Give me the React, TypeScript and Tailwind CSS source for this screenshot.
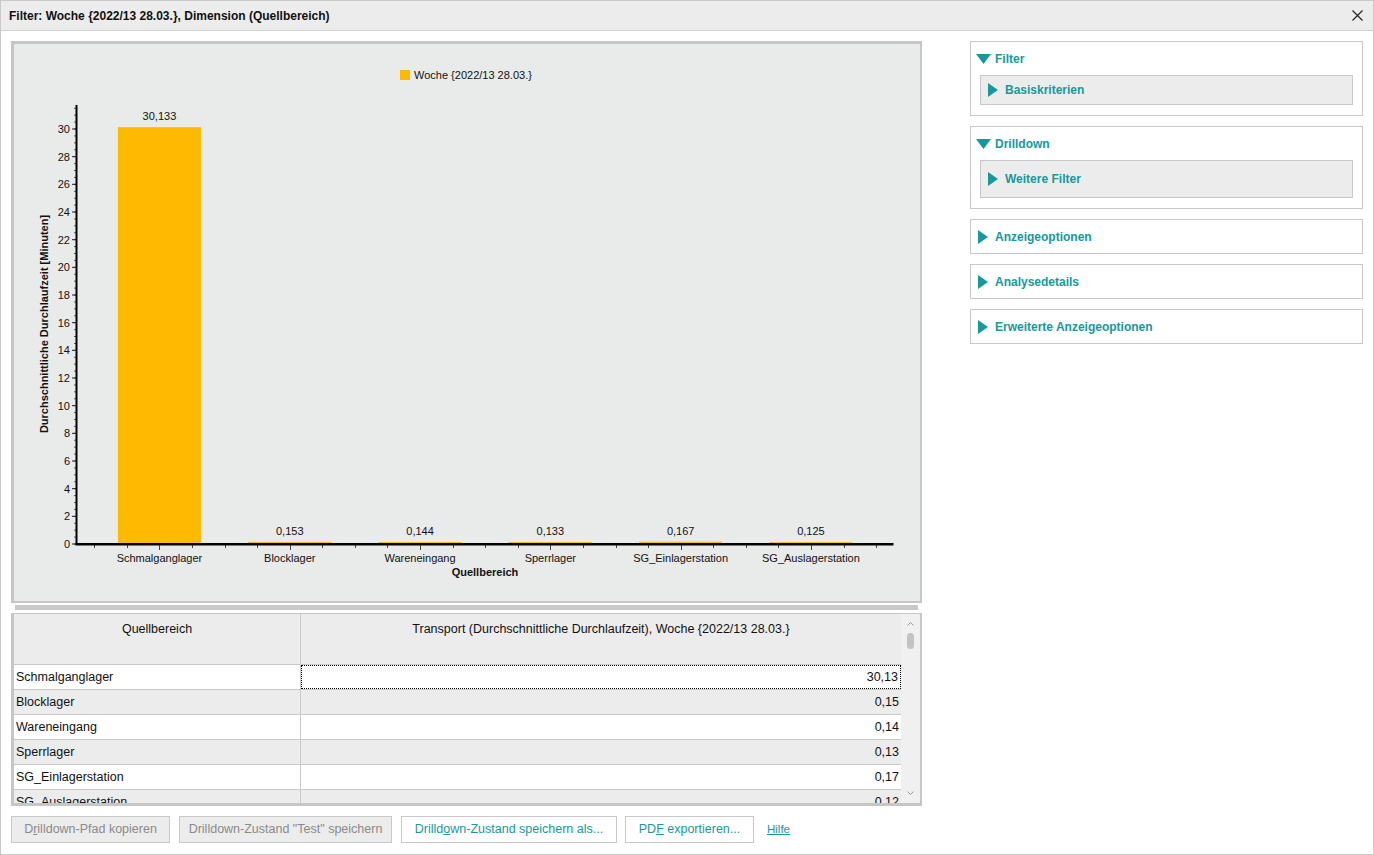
const TEAL = "#15999b";

type Bar = { name: string; value: number; label: string };

const bars: Bar[] = [
  { name: "Schmalganglager", value: 30.133, label: "30,133" },
  { name: "Blocklager", value: 0.153, label: "0,153" },
  { name: "Wareneingang", value: 0.144, label: "0,144" },
  { name: "Sperrlager", value: 0.133, label: "0,133" },
  { name: "SG_Einlagerstation", value: 0.167, label: "0,167" },
  { name: "SG_Auslagerstation", value: 0.125, label: "0,125" },
];

const rows = [
  ["Schmalganglager", "30,13"],
  ["Blocklager", "0,15"],
  ["Wareneingang", "0,14"],
  ["Sperrlager", "0,13"],
  ["SG_Einlagerstation", "0,17"],
  ["SG_Auslagerstation", "0,12"],
];

// chart geometry in page coordinates (viewBox starts at the panel's inner corner)
const Y0 = 544;
const UNIT = 13.833;
const X_START = 94.3;
const CAT_W = 130.3;

function Chart() {
  const yLabels = Array.from({ length: 16 }, (_, i) => i * 2);
  const minor = Array.from({ length: 64 }, (_, i) => i * 0.5);
  const xTicks = Array.from({ length: 25 }, (_, k) => k);
  return (
    <svg width={906} height={557} viewBox="14 44 906 557" className="block" style={{ fontFamily: '"Liberation Sans", Arial, sans-serif' }}>
      <rect x={400} y={70} width={10} height={10} fill="#ffb900" />
      <text x={414} y={79} fontSize={11} fill="#111">Woche {"{"}2022/13 28.03.{"}"}</text>

      {minor.map((v) => (
        <line key={v} x1={74} x2={76} y1={Y0 - v * UNIT} y2={Y0 - v * UNIT} stroke="#555" strokeWidth={1} />
      ))}
      {yLabels.map((v) => (
        <g key={v}>
          <line x1={72} x2={76} y1={Y0 - v * UNIT} y2={Y0 - v * UNIT} stroke="#222" strokeWidth={1} />
          <text x={70} y={Y0 - v * UNIT + 4} fontSize={11} textAnchor="end" fill="#111">{v}</text>
        </g>
      ))}

      {bars.map((b, i) => {
        const cx = X_START + CAT_W / 2 + i * CAT_W;
        const h = Math.max(b.value * UNIT, 2);
        return (
          <g key={b.name}>
            <rect x={cx - 41.5} y={Y0 - h} width={83} height={h} fill="#ffb900" />
            <text x={cx} y={Y0 - h - 7} fontSize={11} textAnchor="middle" fill="#111">{b.label}</text>
            <text x={cx} y={562} fontSize={11} textAnchor="middle" fill="#111">{b.name}</text>
          </g>
        );
      })}

      {xTicks.map((k) => {
        const x = Math.round(X_START + k * (CAT_W / 4)) + 0.5;
        return <line key={k} x1={x} x2={x} y1={545} y2={k % 4 === 2 ? 550 : 548} stroke="#444" strokeWidth={1} />;
      })}

      <rect x={75.5} y={105} width={2} height={440} fill="#000" />
      <rect x={75.5} y={543} width={818} height={2.5} fill="#000" />

      <text x={485} y={576} fontSize={11} fontWeight="bold" textAnchor="middle" fill="#111">Quellbereich</text>
      <text x={48} y={324} fontSize={11} fontWeight="bold" textAnchor="middle" fill="#111" transform="rotate(-90 48 324)">
        Durchschnittliche Durchlaufzeit [Minuten]
      </text>
    </svg>
  );
}

function TriDown() {
  return (
    <svg width={15} height={10} viewBox="0 0 15 10" className="shrink-0">
      <polygon points="0,0 15,0 7.5,10" fill={TEAL} />
    </svg>
  );
}

function TriRight() {
  return (
    <svg width={10} height={14} viewBox="0 0 10 14" className="shrink-0">
      <polygon points="0,0 10,7 0,14" fill={TEAL} />
    </svg>
  );
}

function Collapsed({ title }: { title: string }) {
  return (
    <div className="flex h-[35px] items-center gap-[7px] border border-[#c8c8c8] pl-[7px]">
      <TriRight />
      <span>{title}</span>
    </div>
  );
}

function Expanded({ title, sub, subH }: { title: string; sub: string; subH: string }) {
  return (
    <div className="flex flex-col border border-[#c8c8c8] pb-[10px]">
      <div className="flex h-[33px] items-center gap-[4px] pl-[5px]">
        <TriDown />
        <span>{title}</span>
      </div>
      <div className={`mx-[9px] flex items-center gap-[7px] border border-[#c8c8c8] bg-[#ececec] pl-[7px] ${subH}`}>
        <TriRight />
        <span>{sub}</span>
      </div>
    </div>
  );
}

export default function App() {
  return (
    <div
      className="flex h-[855px] w-[1374px] flex-col border border-[#c9c9c9] bg-white text-[#111]"
      style={{ fontFamily: '"Liberation Sans", Arial, sans-serif' }}
    >
      <div className="flex h-[30px] shrink-0 items-center justify-between border-b border-[#d2d2d2] bg-[#ececec] pl-[8px] pr-[10px]">
        <span className="text-[12px] font-bold">Filter: Woche {"{"}2022/13 28.03.{"}"}, Dimension (Quellbereich)</span>
        <svg width={11} height={11} viewBox="0 0 11 11">
          <path d="M0.5 0.5 L10.5 10.5 M10.5 0.5 L0.5 10.5" stroke="#222" strokeWidth={1.2} />
        </svg>
      </div>

      <div className="flex pl-[10px] pt-[10px]">
        <div className="flex w-[911px] flex-col">
          <div className="h-[562px] border-b-2 border-l-[3px] border-r-2 border-t-[3px] border-[#c6c6c6] bg-[#e9eaea]">
            <Chart />
          </div>

          <div className="h-[10px] pt-[2px]">
            <div className="mx-[4px] h-[5px] bg-[#c8c8c8]" />
          </div>

          <div className="flex h-[193px] border-b-[3px] border-l-[3px] border-r-2 border-t border-[#c6c6c6] text-[12.5px]">
            <div className="flex w-[887px] flex-col overflow-hidden">
              <div className="flex h-[51px] shrink-0 border-b border-[#c8c8c8] bg-[#ececec]">
                <div className="w-[287px] border-r border-[#c8c8c8] pt-[6px] text-center">Quellbereich</div>
                <div className="flex-1 pt-[6px] text-center">
                  Transport (Durchschnittliche Durchlaufzeit), Woche {"{"}2022/13 28.03.{"}"}
                </div>
              </div>
              {rows.map(([name, val], i) => (
                <div
                  key={name}
                  className={`flex h-[25px] shrink-0 border-b border-[#c8c8c8] ${i % 2 === 0 ? "bg-white" : "bg-[#ececec]"}`}
                >
                  <div className="flex w-[287px] items-center border-r border-[#c8c8c8] pl-[2px]">{name}</div>
                  <div className="flex-1">
                    <div
                      className={`flex h-full items-center justify-end pr-[2px] ${
                        i === 0 ? "border border-dotted border-black" : ""
                      }`}
                    >
                      {val}
                    </div>
                  </div>
                </div>
              ))}
            </div>
            <div className="relative w-[19px] bg-[#f0f0f0]">
              <svg width={7} height={4} viewBox="0 0 7 4" className="absolute left-[6px] top-[8px]">
                <path d="M0.5 3.5 L3.5 0.5 L6.5 3.5" stroke="#9a9a9a" fill="none" />
              </svg>
              <div className="absolute left-[6px] top-[19px] h-[16px] w-[7px] rounded-full bg-[#c3c3c3]" />
              <svg width={7} height={4} viewBox="0 0 7 4" className="absolute bottom-[8px] left-[6px]">
                <path d="M0.5 0.5 L3.5 3.5 L6.5 0.5" stroke="#9a9a9a" fill="none" />
              </svg>
            </div>
          </div>

          <div className="mt-[10px] flex h-[27px] items-stretch text-[12.5px]">
            <button type="button" className="w-[159px] border border-[#c8c8c8] bg-[#ececec] text-[#8a8a8a]">
              D<u>r</u>illdown-Pfad kopieren
            </button>
            <button type="button" className="ml-[9px] w-[213px] border border-[#c8c8c8] bg-[#ececec] text-[#8a8a8a]">
              Drilldown-Zustand "Test" speichern
            </button>
            <button type="button" className="ml-[9px] w-[216px] border border-[#c8c8c8] bg-white" style={{ color: TEAL }}>
              Drilld<u>o</u>wn-Zustand speichern als...
            </button>
            <button type="button" className="ml-[8px] w-[129px] border border-[#c8c8c8] bg-white" style={{ color: TEAL }}>
              PD<u>F</u> exportieren...
            </button>
            <span className="ml-[13px] flex items-center text-[11.5px] underline" style={{ color: TEAL }}>
              Hilfe
            </span>
          </div>
        </div>

        <div className="ml-[48px] flex w-[393px] flex-col gap-[10px] text-[12px] font-bold" style={{ color: TEAL }}>
          <Expanded title="Filter" sub="Basiskriterien" subH="h-[30px]" />
          <Expanded title="Drilldown" sub="Weitere Filter" subH="h-[38px]" />
          <Collapsed title="Anzeigeoptionen" />
          <Collapsed title="Analysedetails" />
          <Collapsed title="Erweiterte Anzeigeoptionen" />
        </div>
      </div>
    </div>
  );
}
